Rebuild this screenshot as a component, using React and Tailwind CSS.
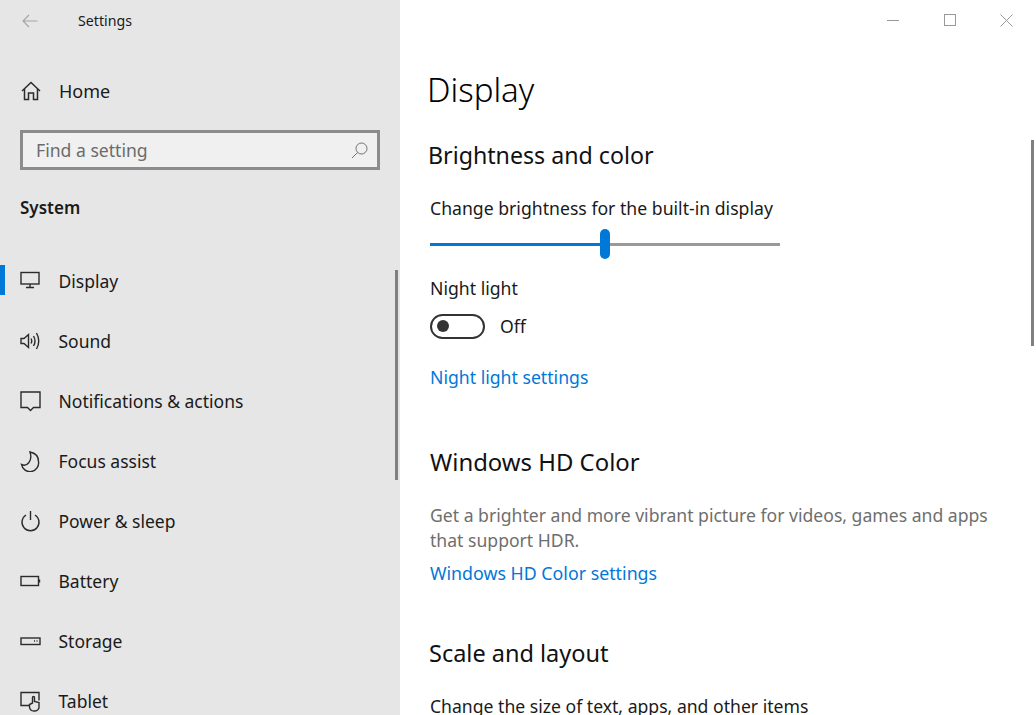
const navItems = [
  {
    label: "Display",
    active: true,
    icon: (
      <>
        <rect x="1" y="1.500" width="18" height="11.500" />
        <path d="M10 13v3M6 16.500h8" />
      </>
    ),
  },
  {
    label: "Sound",
    icon: (
      <>
        <path d="M1 7.500h3l4.500-4v13l-4.500-4h-3z" />
        <path d="M11 7.500q1.500 2.500 0 5M13.500 5q3 5 0 10M16.500 2q4.500 8 0 16" />
      </>
    ),
  },
  {
    label: "Notifications & actions",
    icon: <path d="M1 1h19v15.500h-6.500l-3 3-3-3h-6.500z" />,
  },
  {
    label: "Focus assist",
    icon: <path d="M10 1c5 1 8.500 4.500 8.500 9.500a8.500 8.500 0 0 1-17 3c5 2.500 11.500-3 8.500-12.500z" />,
  },
  {
    label: "Power & sleep",
    icon: (
      <>
        <path d="M10.500 0v9" />
        <path d="M6 4a8.500 8.500 0 1 0 9 0" />
      </>
    ),
  },
  {
    label: "Battery",
    icon: (
      <>
        <rect x="1" y="5.500" width="17.500" height="9" />
        <path d="M19.500 8.500v3" />
      </>
    ),
  },
  {
    label: "Storage",
    icon: (
      <>
        <rect x="1" y="7" width="19" height="6.500" />
        <path d="M14 10h1M16.500 10h1" />
      </>
    ),
  },
  {
    label: "Tablet",
    icon: (
      <>
        <path d="M9 14.500h-8v-13h18v8" />
        <path d="M12.500 6.500a1 1 0 0 1 2 0v4l4.500 1v4a4 4 0 0 1-4 4.500h-1a4.500 4.500 0 0 1-4.500-4v-2.500l3-1.500z" />
      </>
    ),
  },
];

function NavItem({ item }) {
  return (
    <div className="relative flex h-[60px] items-center pl-5">
      {item.active && <div className="absolute left-0 top-[14px] h-[30px] w-[5px] bg-[#0078d7]" />}
      <svg
        width="21"
        height="21"
        viewBox="0 0 21 21"
        fill="none"
        stroke="#2b2b2b"
        strokeWidth="1.400"
        className="shrink-0"
      >
        {item.icon}
      </svg>
      <span className="ml-[17.500px] text-[17.500px] text-[#1a1a1a]">{item.label}</span>
    </div>
  );
}

function Sidebar() {
  return (
    <aside className="relative h-[715px] w-[400px] shrink-0 overflow-hidden bg-[#e6e6e6]">
      <div className="flex h-[42px] items-center pl-[22px]">
        <svg width="16" height="14" viewBox="0 0 16 14" fill="none" stroke="#a3a3a3" strokeWidth="1.100">
          <path d="M15.500 7H1M7 1L1 7l6 6" />
        </svg>
        <span className="ml-10 text-[14.200px] text-[#1a1a1a]">Settings</span>
      </div>

      <div className="mt-[27px] flex h-[44px] items-center pl-[21px]">
        <svg width="20" height="20" viewBox="0 0 20 20" fill="none" stroke="#2b2b2b" strokeWidth="1.500">
          <path d="M1 10l9-8.500L19 10" />
          <path d="M3.500 8v10.500h4V12h5v6.500h4V8" />
        </svg>
        <span className="ml-[18px] text-[18px] text-[#1a1a1a]">Home</span>
      </div>

      <div className="ml-5 mt-[17px] flex h-10 w-[360px] items-center justify-between border-[3px] border-[#8c8c8c] bg-[#f0f0f0] pl-[13px] pr-[9px]">
        <span className="text-[17.600px] text-[#6b6b6b]">Find a setting</span>
        <svg width="17" height="17" viewBox="0 0 17 17" fill="none" stroke="#707070" strokeWidth="1">
          <circle cx="10.500" cy="6.500" r="5.500" />
          <path d="M6.500 10.500L1 16" />
        </svg>
      </div>

      <div className="ml-5 mt-[26px] text-[17px] font-semibold leading-[24px] text-[#1a1a1a]">System</div>

      <div className="mt-[31px]">
        {navItems.map((item) => (
          <NavItem key={item.label} item={item} />
        ))}
      </div>

      {/* overlay scrollbar */}
      <div className="absolute left-[395px] top-[270px] h-[210px] w-[3px] bg-[#808080]" />
    </aside>
  );
}

function Slider() {
  return (
    <div className="mt-[9px] flex h-[30px] w-[350px] items-center">
      <div className="h-[3px] w-[170px] bg-[#0078d7]" />
      <div className="h-[30px] w-[10px] rounded-full bg-[#0078d7]" />
      <div className="h-[3px] flex-1 bg-[#999999]" />
    </div>
  );
}

function Main() {
  return (
    <main className="relative h-[715px] flex-1 overflow-hidden bg-white">
      <div className="flex h-[40px] justify-end">
        <div className="flex h-[40px] w-[149px] items-center justify-between pr-[23px]">
          <div className="h-[1px] w-3 bg-[#999999]" />
          <div className="h-3 w-3 border border-[#999999]" />
          <svg width="13" height="13" viewBox="0 0 13 13" stroke="#999999" strokeWidth="1">
            <path d="M.5.500l12 12M12.500.500l-12 12" />
          </svg>
        </div>
      </div>

      <div className="pl-[27px]">
        <h1 className="mt-[27px] text-[33px] font-light leading-[46px] text-black">Display</h1>
        <h2 className="mt-[26px] pl-[1px] text-[23.200px] leading-[32px] text-[#111111]">Brightness and color</h2>

        <div className="pl-[3px]">
          <div className="mt-[25px] text-[17.650px] leading-[24px] text-[#1a1a1a]">Change brightness for the built-in display</div>
          <Slider />
          <div className="mt-[17px] text-[17.650px] leading-[24px] text-[#1a1a1a]">Night light</div>
          <div className="mt-[14px] flex h-[24px] items-center">
            <div className="flex h-[25px] w-[55px] items-center rounded-full border-[2.500px] border-[#333333] pl-[5px]">
              <div className="h-[12px] w-[12px] rounded-full bg-[#333333]" />
            </div>
            <span className="ml-[15px] text-[17.650px] text-[#1a1a1a]">Off</span>
          </div>
          <div className="mt-[27px] text-[17.650px] leading-[24px] text-[#0078d7]">Night light settings</div>

          <h2 className="mt-[57px] text-[23.900px] leading-[32px] text-[#111111]">Windows HD Color</h2>
          <p className="mt-[25px] w-[590px] text-[17.600px] leading-[25px] text-[#6e6e6e]">
            Get a brighter and more vibrant picture for videos, games and apps that support HDR.
          </p>
          <div className="mt-[8px] text-[17.800px] leading-[24px] text-[#0078d7]">Windows HD Color settings</div>
        </div>

        <h2 className="mt-[52px] pl-[2px] text-[23.500px] leading-[32px] text-[#111111]">Scale and layout</h2>
        <div className="mt-[25px] pl-[3px] text-[17.600px] leading-[24px] text-[#1a1a1a]">Change the size of text, apps, and other items</div>
      </div>

      {/* overlay scrollbar */}
      <div className="absolute left-[631px] top-[140px] h-[206px] w-[3px] bg-[#808080]" />
    </main>
  );
}

export default function App() {
  return (
    <div className="flex h-[715px] w-[1036px] overflow-hidden font-['Noto_Sans',sans-serif]">
      <Sidebar />
      <Main />
    </div>
  );
}
